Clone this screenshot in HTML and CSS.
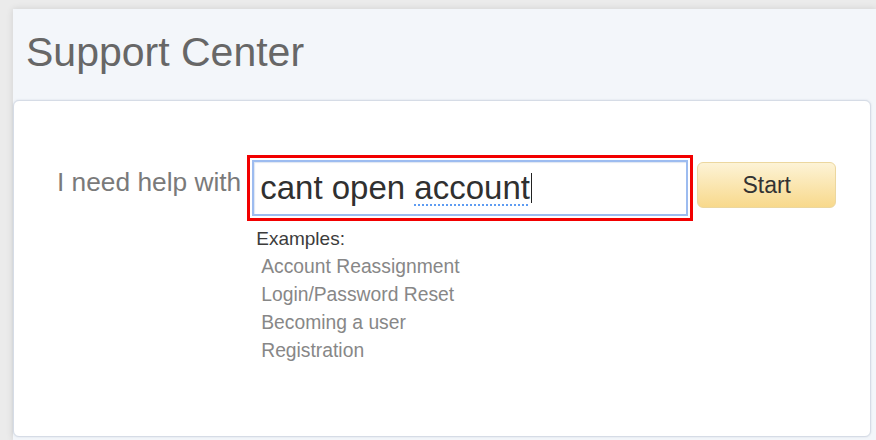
FILE: index.html
```html
<!DOCTYPE html>
<html lang="en">
<head>
<meta charset="utf-8">
<title>Support Center</title>
<link rel="stylesheet" href="styles.css">
</head>
<body>
  <div class="panel">
    <header class="panel-head">
      <h1 class="title">Support Center</h1>
    </header>
    <section class="panel-body">
      <form class="search-row" onsubmit="return false">
        <label class="search-label" for="q">I need help with</label>
        <div class="search-col">
          <div class="highlight">
            <div class="field" id="q">
              <span class="field-text">cant open <span class="misspelled">account</span></span><span class="caret"></span>
            </div>
          </div>
          <div class="examples">
            <div class="examples-title">Examples:</div>
            <ul class="examples-list">
              <li>Account Reassignment</li>
              <li>Login/Password Reset</li>
              <li>Becoming a user</li>
              <li>Registration</li>
            </ul>
          </div>
        </div>
        <button class="start-btn" type="submit">Start</button>
      </form>
    </section>
  </div>
</body>
</html>
```

FILE: styles.css
```css
html, body {
  margin: 0;
  height: 100%;
}

body {
  background: #ebebeb;
  overflow: hidden;
  padding: 9px 0 0 13px;
  box-sizing: border-box;
  font-family: "Liberation Sans", Arial, Helvetica, sans-serif;
}

.panel {
  background: #f3f6fa;
  height: 431px;
  box-sizing: border-box;
  padding-bottom: 3px;
  display: flex;
  flex-direction: column;
  box-shadow: 0 0 7px rgba(0, 0, 0, 0.12);
}

.panel-head {
  height: 91px;
  box-sizing: border-box;
  padding: 20px 0 0 13px;
}

.title {
  margin: 0;
  font-weight: normal;
  font-size: 41px;
  line-height: 46px;
  color: #676767;
}

.panel-body {
  flex: 1;
  margin-right: 5px;
  background: #fff;
  border: 1px solid #d6dce6;
  border-radius: 6px;
  box-shadow: 0 0 2px rgba(150, 165, 190, 0.35);
  padding: 54px 0 0 43px;
}

.search-row {
  display: flex;
  align-items: flex-start;
  margin: 0;
}

.search-label {
  font-size: 26.3px;
  line-height: 30px;
  color: #7a7a7a;
  margin-top: 12px;
  margin-right: 6px;
  white-space: nowrap;
}

.search-col {
  display: flex;
  flex-direction: column;
}

.highlight {
  border: 3px solid #f20000;
  padding: 2px;
  width: 436px;
  height: 56px;
}

.field {
  box-sizing: border-box;
  height: 56px;
  border: 2px solid #9dbcf0;
  box-shadow: inset 1px 1px 1px rgba(120, 150, 200, 0.25);
  padding-left: 6px;
  display: flex;
  align-items: center;
  font-size: 33px;
  color: #303030;
  white-space: nowrap;
}

.misspelled {
  text-decoration: underline dotted #5f9cf2;
  text-decoration-thickness: 2px;
  text-underline-offset: 5px;
}

.caret {
  display: inline-block;
  width: 1px;
  height: 30px;
  margin-left: 1px;
  background: #222;
}

.examples {
  margin: 4px 0 0 9px;
  color: #3c3c3c;
}

.examples-title {
  font-size: 19px;
  line-height: 28px;
}

.examples-list {
  list-style: none;
  margin: 0;
  padding: 0 0 0 5px;
  font-size: 19.3px;
  line-height: 28px;
  color: #878787;
}

.start-btn {
  margin: 7px 0 0 4px;
  width: 139px;
  height: 46px;
  border: 1px solid #ecd79f;
  border-radius: 6px;
  background: linear-gradient(#fdf3d6, #f8d98c);
  font-family: inherit;
  font-size: 23px;
  color: #333;
  cursor: pointer;
  padding: 0;
}
```
